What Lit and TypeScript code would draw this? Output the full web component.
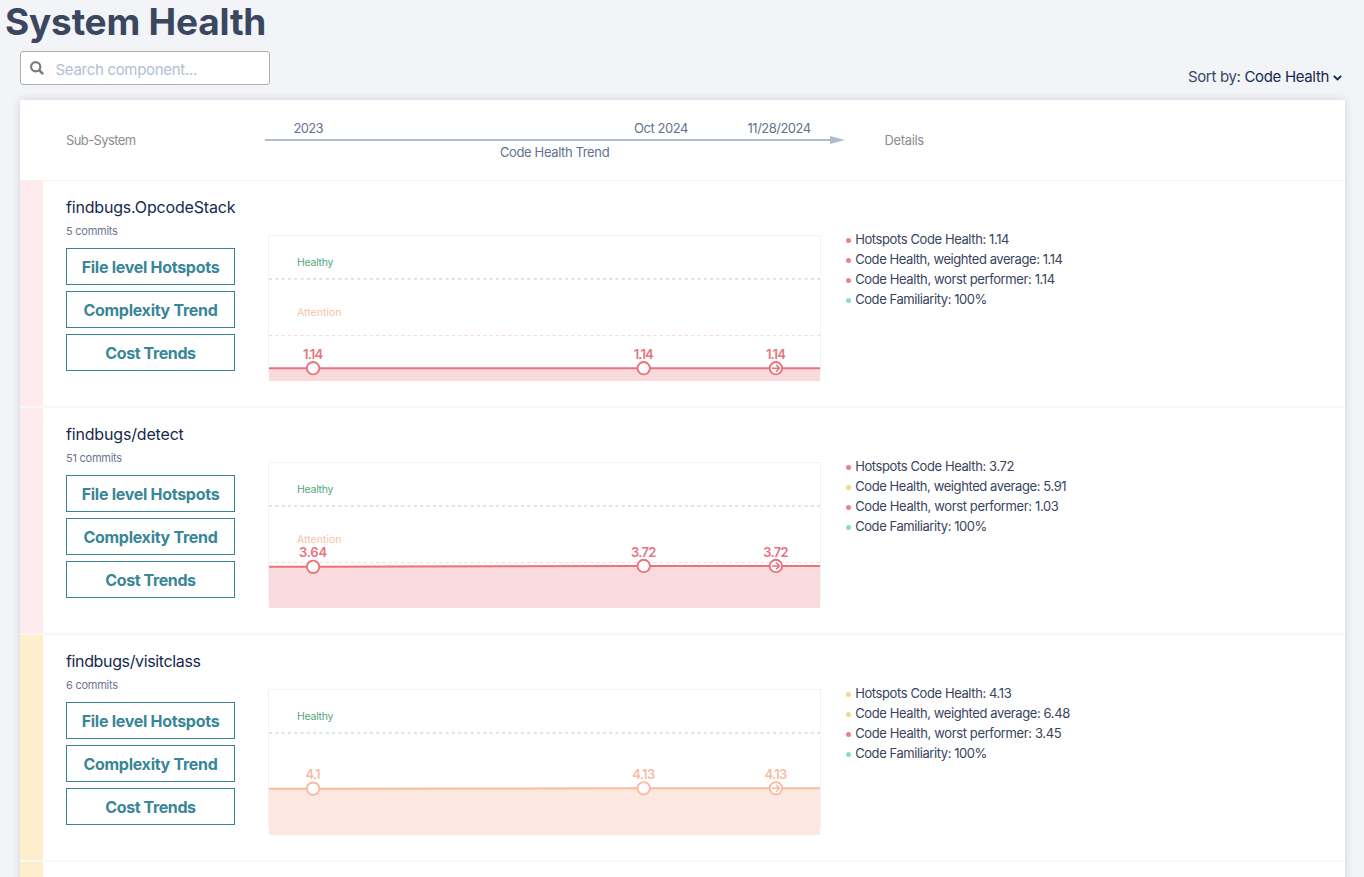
import { LitElement, html, svg, css } from "lit";
import { customElement, property } from "lit/decorators.js";

type Level = "bad" | "warn" | "good";
interface Detail { level: Level; text: string; spacing: number; }
interface Point { x: number; value: number; label: string; width: number; }
interface SubSystem {
  name: string; spacing: number; commits: string; level: Level; points: Point[]; details: Detail[];
}

const COLORS: Record<string, { line: string; fill: string }> = {
  bad: { line: "#e8737c", fill: "#f9dbdd" },
  warn: { line: "#f8bba2", fill: "#fce8e1" },
};

const pts = (items: [number, string, number][]): Point[] =>
  items.map(([value, label, width], i) => ({ x: [44.1, 374.7, 506.9][i], value, label, width }));

const SYSTEMS: SubSystem[] = [
  {
    name: "findbugs.OpcodeStack", spacing: -0.18, commits: "5 commits", level: "bad",
    points: pts([[1.14, "1.14", 20], [1.14, "1.14", 20], [1.14, "1.14", 20]]),
    details: [
      { level: "bad", text: "Hotspots Code Health: 1.14", spacing: -0.4 },
      { level: "bad", text: "Code Health, weighted average: 1.14", spacing: -0.43 },
      { level: "bad", text: "Code Health, worst performer: 1.14", spacing: -0.38 },
      { level: "good", text: "Code Familiarity: 100%", spacing: -0.43 },
    ],
  },
  {
    name: "findbugs/detect", spacing: -0.17, commits: "51 commits", level: "bad",
    points: pts([[3.64, "3.64", 28], [3.72, "3.72", 25.5], [3.72, "3.72", 25.5]]),
    details: [
      { level: "bad", text: "Hotspots Code Health: 3.72", spacing: -0.4 },
      { level: "warn", text: "Code Health, weighted average: 5.91", spacing: -0.41 },
      { level: "bad", text: "Code Health, worst performer: 1.03", spacing: -0.37 },
      { level: "good", text: "Code Familiarity: 100%", spacing: -0.43 },
    ],
  },
  {
    name: "findbugs/visitclass", spacing: -0.36, commits: "6 commits", level: "warn",
    points: pts([[4.1, "4.1", 15], [4.13, "4.13", 23], [4.13, "4.13", 23]]),
    details: [
      { level: "warn", text: "Hotspots Code Health: 4.13", spacing: -0.4 },
      { level: "warn", text: "Code Health, weighted average: 6.48", spacing: -0.4 },
      { level: "bad", text: "Code Health, worst performer: 3.45", spacing: -0.37 },
      { level: "good", text: "Code Familiarity: 100%", spacing: -0.43 },
    ],
  },
];

const toY = (v: number) => 132.2 - (v - 1.14) * 11.34;

@customElement("trend-chart")
export class TrendChart extends LitElement {
  @property({ attribute: false }) points: Point[] = [];
  @property() level: Level = "bad";

  static styles = css`
    :host { display: block; width: 553px; height: 146px; }
    svg { display: block; overflow: visible; font-family: Inter, sans-serif; }
    .zone { font-size: 10.5px; }
    .value { font-size: 13px; font-weight: 600; }
  `;

  render() {
    const c = COLORS[this.level];
    const p = this.points;
    const path = `M0 ${toY(p[0].value)}` + p.map((q) => `L${q.x} ${toY(q.value)}`).join("") + `L551 ${toY(p[2].value)}`;
    return html`
      <svg width="553" height="146" viewBox="-1 -1 553 146">
        <path d="M-.5 138V-.5H551.5V138" fill="none" stroke="#f1f2f5" />
        <path d="M0 42.8H551" stroke="#d0e7dd" stroke-width="1.7" stroke-dasharray="3.15 3.15" />
        <text class="zone" x="28" y="30" textLength="36.5" fill="#54a67c">Healthy</text>
        ${this.level === "bad" ? svg`
          <path d="M0 99.5H551" stroke="#fbdacd" stroke-width="1.2" stroke-dasharray="3.15 3.15" />
          <text class="zone" x="28" y="80" textLength="44.5" fill="#f8bfa6">Attention</text>` : ""}
        <path d="${path}V145H0Z" fill=${c.fill} />
        <path d=${path} fill="none" stroke=${c.line} stroke-width="2" />
        ${p.map((q, i) => svg`
          <text class="value" x=${q.x - q.width / 2} y=${toY(q.value) - 9.4} textLength=${q.width} fill=${c.line}>${q.label}</text>
          <circle cx=${q.x} cy=${toY(q.value)} r="6.2" fill="#fff" stroke=${c.line} stroke-width="1.9" />
          ${i === 2 ? svg`<path transform="translate(${q.x} ${toY(q.value)})" d="M-4 0H3.5M.2 -3.4L3.6 0L.2 3.4" fill="none" stroke=${c.line} stroke-width="1.5" />` : ""}
        `)}
      </svg>`;
  }
}

@customElement("system-row")
export class SystemRow extends LitElement {
  @property({ attribute: false }) system!: SubSystem;

  static styles = css`
    :host { display: block; }
    .row { display: flex; height: 225px; border-bottom: 2px solid #f7f8fa; }
    .stripe { width: 23px; flex: none; }
    .stripe.bad { background: #ffebed; }
    .stripe.warn { background: #ffeecb; }
    .info { width: 169px; margin-left: 23px; padding-top: 15px; flex: none; }
    .name { font-size: 16px; line-height: 22px; color: #17294f; white-space: nowrap; }
    .commits { font-size: 11px; line-height: 14px; letter-spacing: -0.25px; margin: 6px 0 10px; color: #6b7690; }
    .actions { display: grid; gap: 6px; }
    .action { box-sizing: border-box; height: 37px; width: 169px; padding: 1px 0 0; margin: 0; border: 1px solid #378396; background: #fff;
      color: #388697; font: 700 16px Inter, sans-serif; letter-spacing: -0.28px; white-space: nowrap; }
    .action:last-child { letter-spacing: -0.4px; }
    trend-chart { margin: 54px 0 0 33px; flex: none; }
    .details { margin: 49px 0 0 24px; padding: 0; list-style: none; }
    .detail { display: flex; align-items: center; height: 20px; font-size: 13px; color: #39445c; white-space: nowrap; }
    .label { padding-bottom: 2px; }
    .dot { width: 5.4px; height: 5.4px; border-radius: 50%; margin: 1px 4.2px 0 .6px; }
    .dot.bad { background: #f07e8b; }
    .dot.warn { background: #f8d587; }
    .dot.good { background: #86dfc3; }
  `;

  render() {
    const s = this.system;
    return html`
      <div class="row">
        <div class="stripe ${s.level}"></div>
        <div class="info">
          <div class="name" style="letter-spacing:${s.spacing}px">${s.name}</div>
          <div class="commits">${s.commits}</div>
          <div class="actions">
            <button class="action">File level Hotspots</button>
            <button class="action">Complexity Trend</button>
            <button class="action">Cost Trends</button>
          </div>
        </div>
        <trend-chart .points=${s.points} .level=${s.level}></trend-chart>
        <ul class="details">
          ${s.details.map((d) => html`<li class="detail"><span class="dot ${d.level}"></span><span class="label" style="letter-spacing:${d.spacing}px">${d.text}</span></li>`)}
        </ul>
      </div>`;
  }
}

@customElement("app-root")
export class AppRoot extends LitElement {
  static styles = css`
    :host { display: block; height: 877px; overflow: hidden; background: #f2f4f8; font-family: Inter, sans-serif; color: #3b475f; }
    .title { margin: 0; padding-left: 5px; height: 51px; font-size: 37px; line-height: 44px; font-weight: 700; letter-spacing: -0.2px; }
    .toolbar { display: flex; justify-content: space-between; padding: 0 22px 0 20px; height: 49px; }
    .search { box-sizing: border-box; width: 250px; height: 34px; border: 1px solid #aeaeae; border-radius: 3px; background: #fff;
      display: flex; align-items: center; padding-left: 9px; }
    .glass { width: 14px; height: 14px; margin: 0 11.5px 0 0; }
    .placeholder { font-size: 15px; color: #b4bed2; padding-top: 3px; letter-spacing: -0.3px; }
    .sort { display: flex; align-items: center; height: 20px; margin-top: 15px; font-size: 15px; letter-spacing: -0.33px; white-space: pre; }
    .sort b { font-weight: 400; color: #17294f; }
    .chevron { margin: 4px 0 0 4px; }
    .card { margin: 0 19px 0 20px; background: #fff; height: 900px; box-shadow: 0 0 8px rgba(40, 45, 70, .17); }
    .head { display: flex; height: 80px; border-bottom: 1px solid #f2f3f6; font-size: 13px; }
    .col { line-height: 80px; color: #8c8c8c; padding-left: 46px; width: 199px; box-sizing: border-box; width: 245px; letter-spacing: -0.6px; }
    .timeline { display: block; }
    .timeline text { font-size: 13px; fill: #64718f; }
    .col.last { padding-left: 39.5px; width: auto; letter-spacing: -0.35px; }
    .stripe { width: 23px; height: 40px; background: #ffeecb; }
  `;

  render() {
    return html`
      <h1 class="title">System Health</h1>
      <div class="toolbar">
        <div class="search">
          <svg class="glass" viewBox="0 0 14 14"><circle cx="5.7" cy="5.7" r="4.6" fill="none" stroke="#7c7c7c" stroke-width="2.2" /><path d="M9 9L13.1 13.1" stroke="#7c7c7c" stroke-width="2.6" /></svg>
          <span class="placeholder">Search component...</span>
        </div>
        <div class="sort">Sort by: <b>Code Health</b><svg class="chevron" width="9" height="6" viewBox="0 0 9 6"><path d="M.8 .8L4.5 4.4L8.2 .8" fill="none" stroke="#17294f" stroke-width="1.8" /></svg></div>
      </div>
      <main class="card">
        <div class="head">
          <div class="col">Sub-System</div>
          <svg class="timeline" width="580" height="80">
            <path d="M0 40H566" stroke="#b0bbcf" stroke-width="2" />
            <path d="M565 36L580 40L565 44Z" fill="#b0bbcf" />
            <text x="28.6" y="33" textLength="30">2023</text>
            <text x="369" y="33" textLength="54.5">Oct 2024</text>
            <text x="482.6" y="33" textLength="63.5">11/28/2024</text>
            <text x="235" y="57" textLength="109.6">Code Health Trend</text>
          </svg>
          <div class="col last">Details</div>
        </div>
        ${SYSTEMS.map((s) => html`<system-row .system=${s}></system-row>`)}
        <div class="stripe"></div>
      </main>`;
  }
}
